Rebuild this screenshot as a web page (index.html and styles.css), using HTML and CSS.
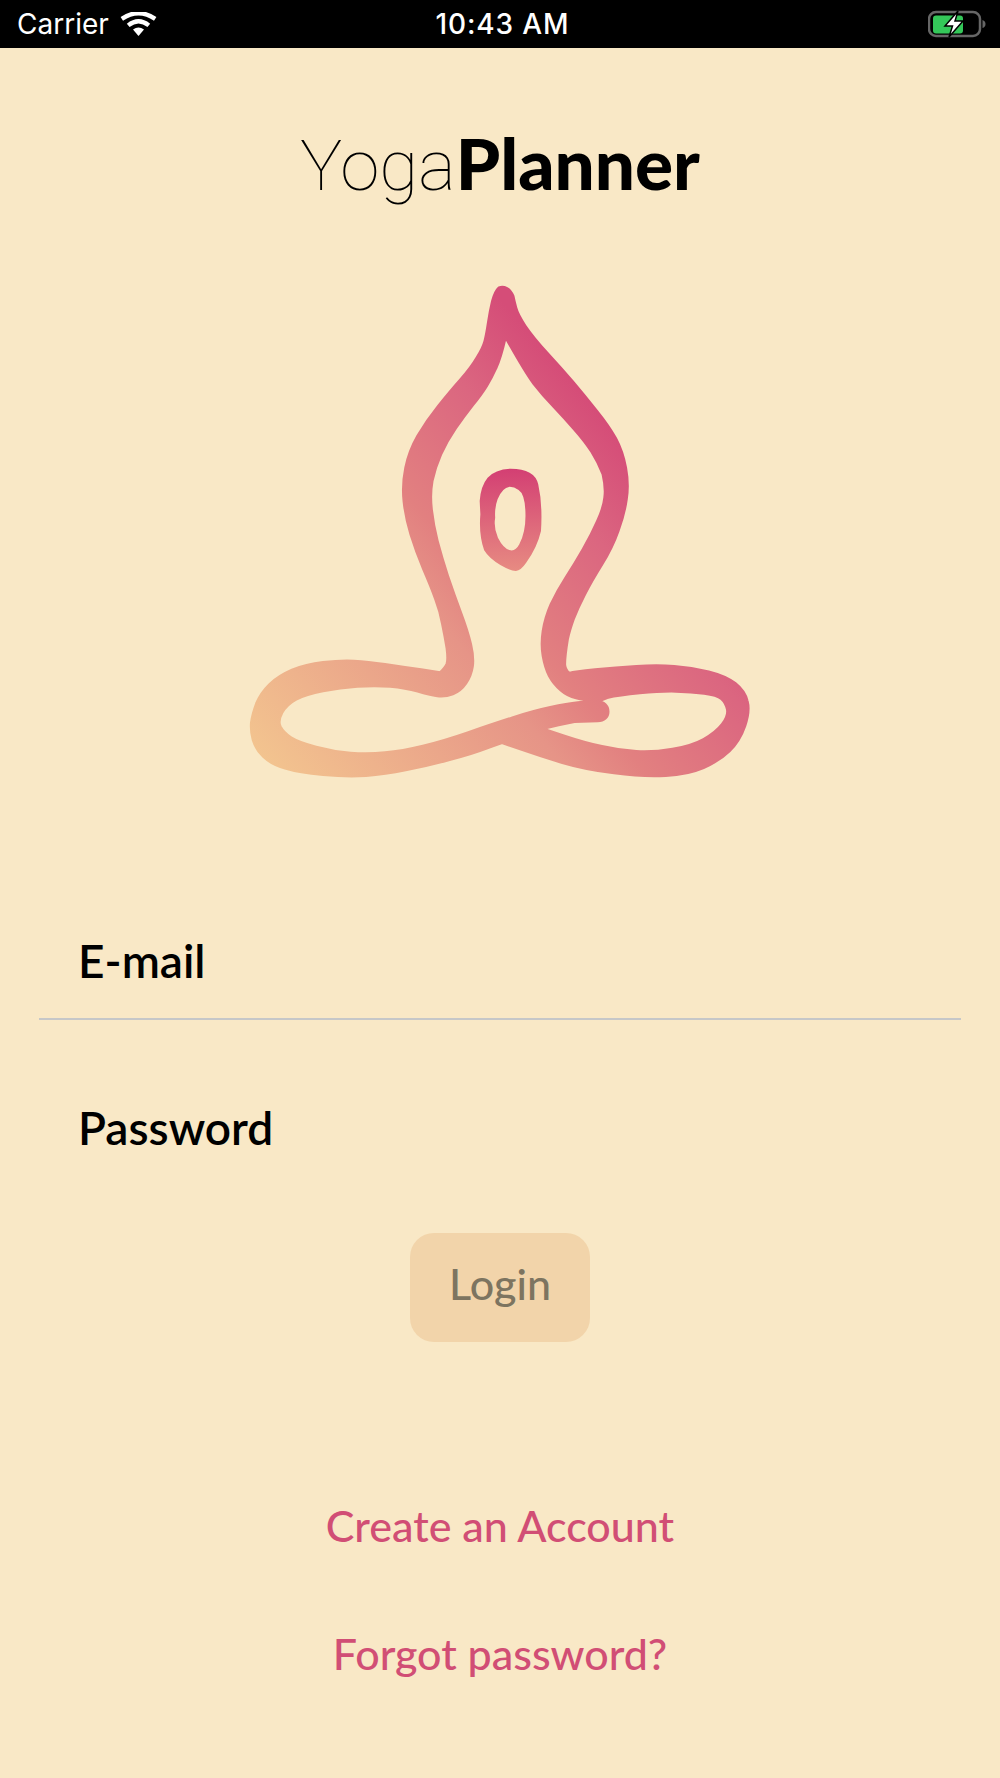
FILE: index.html
```html
<!DOCTYPE html>
<html lang="en">
<head>
    <meta charset="UTF-8">
    <meta name="viewport" content="width=device-width, initial-scale=1.0">
    <title>YogaPlanner</title>
    <link rel="stylesheet" href="styles.css">
</head>
<body>
    <!-- Status bar -->
    <div class="status-bar">
        <div class="status-left">
            <span class="carrier">Carrier</span>
            <svg class="wifi" width="37" height="24" viewBox="0 0 37 24">
                <path d="M18.5 24 L13 17.6 Q18.5 13.6 24 17.6 Z" fill="#fff"/>
                <path d="M8.2 13.4 Q18.5 5.2 28.8 13.4" fill="none" stroke="#fff" stroke-width="4.4"/>
                <path d="M1.8 6.8 Q18.5 -4.4 35.2 6.8" fill="none" stroke="#fff" stroke-width="4.4"/>
            </svg>
        </div>
        <span class="time">10:43 AM</span>
        <svg class="battery" width="60" height="28" viewBox="0 0 60 28">
            <rect x="1" y="2" width="51" height="24" rx="7" fill="none" stroke="#666" stroke-width="2.5"/>
            <rect x="5" y="5.5" width="30" height="18" rx="3" fill="#34c759"/>
            <path d="M54.5 10 Q57.5 11 57.5 14 Q57.5 17 54.5 18 Z" fill="#666"/>
            <path d="M30 1 L17 16 L24.5 16 L21 27 L35 11 L27 11 Z" fill="#fff" stroke="#000" stroke-width="1.5"/>
        </svg>
    </div>

    <div class="screen">
        <h1 class="brand"><span class="brand-light">Yoga</span><span class="brand-bold">Planner</span></h1>

        <svg class="logo" width="540" height="520" viewBox="0 0 1568 1560" preserveAspectRatio="none">
            <defs>
                <linearGradient id="body-fade" gradientUnits="userSpaceOnUse" x1="100" y1="1500" x2="1239" y2="548">
                    <stop offset="0" stop-color="#f3c58f"/>
                    <stop offset="0.457" stop-color="#e69487"/>
                    <stop offset="0.57" stop-color="#e28080"/>
                    <stop offset="0.8" stop-color="#db6680"/>
                    <stop offset="0.966" stop-color="#d54d78"/>
                </linearGradient>
                <linearGradient id="chakra-fade" x1="0" y1="0" x2="0" y2="1">
                    <stop offset="0" stop-color="#d33f73"/>
                    <stop offset="1" stop-color="#e78b82"/>
                </linearGradient>
            </defs>
            <!-- body outline, holes cut with evenodd -->
            <path class="logo-body" fill="url(#body-fade)" stroke="url(#body-fade)" fill-rule="evenodd" d="
                M781 50 Q770 60 762 90 Q755 120 750 155 Q745 190 740 210 Q735 230 717 260 Q700 290 670 325
                Q640 360 605 405 Q570 450 545 495 Q520 540 510 590 Q500 640 505 690 Q510 740 525 790
                Q540 840 562 895 Q585 950 597 985 Q610 1020 617 1060 Q625 1100 630 1132 Q634 1165 630 1178
                Q625 1190 610 1205 L555 1196 Q500 1188 450 1180 Q400 1173 360 1170 Q320 1168 270 1174
                Q220 1180 180 1197 Q140 1215 115 1240 Q90 1265 77 1297 Q65 1330 62 1355 Q60 1380 67 1407
                Q75 1435 97 1457 Q120 1480 160 1492 Q200 1505 270 1511 Q340 1518 395 1514 Q450 1510 510 1497
                Q570 1485 635 1467 Q700 1450 745 1432 Q770 1422 790 1415 L845 1435 Q900 1455 965 1475
                Q1030 1495 1115 1506 Q1200 1518 1265 1514 Q1330 1510 1375 1490 Q1420 1470 1450 1440
                Q1480 1410 1495 1365 Q1510 1320 1502 1290 Q1495 1260 1467 1237 Q1440 1215 1390 1202
                Q1340 1190 1290 1186 Q1240 1182 1180 1186 Q1120 1190 1060 1196 Q1000 1202 985 1207
                Q972 1195 972 1180 Q972 1155 980 1105 Q985 1080 997 1045 Q1010 1010 1030 970 Q1050 930 1080 880
                Q1110 830 1127 780 Q1145 730 1151 685 Q1158 640 1149 590 Q1140 540 1120 502 Q1100 465 1065 420
                Q1030 375 995 332 Q960 290 920 245 Q880 200 857 165 Q835 130 830 110 Q825 90 822 75
                Q815 58 804 52 Q793 46 781 50 Z
                M800 198 Q785 265 772 292 Q760 320 745 345 Q730 370 705 402 Q680 435 655 472 Q630 510 612 550
                Q595 590 587 630 Q580 670 585 715 Q590 760 602 810 Q615 860 632 915 Q650 970 670 1025
                Q690 1080 699 1120 Q708 1160 704 1187 Q700 1215 685 1237 Q670 1260 647 1269 Q625 1278 602 1275
                Q580 1272 545 1261 Q510 1250 465 1246 Q420 1243 370 1246 Q320 1250 270 1260 Q220 1270 192 1285
                Q165 1300 151 1325 Q138 1350 146 1367 Q155 1385 177 1400 Q200 1415 250 1428 Q300 1442 350 1446
                Q400 1450 450 1445 Q500 1440 560 1425 Q620 1410 690 1385 Q760 1360 820 1340 Q880 1320 930 1309
                Q980 1298 1010 1295 L1045 1291 Q1030 1287 1005 1281 Q980 1275 960 1257 Q940 1240 927 1215
                Q915 1190 909 1155 Q903 1120 909 1080 Q915 1040 932 1000 Q950 960 975 920 Q1000 880 1025 835
                Q1050 790 1067 750 Q1085 710 1088 680 Q1092 650 1083 610 Q1070 575 1050 542 Q1030 510 1000 475
                Q970 440 940 407 Q910 375 882 338 Q855 300 800 198 Z
                M1066 1292 C1086 1292 1098 1305 1098 1322 C1098 1338 1086 1350 1068 1350 L1000 1352 L954 1362
                L908 1373 L969 1394 Q1030 1415 1080 1426 Q1130 1438 1180 1441 Q1230 1444 1285 1434 Q1340 1425 1375 1405
                Q1410 1385 1429 1360 Q1448 1335 1444 1315 Q1440 1295 1427 1283 Q1415 1272 1377 1267 Q1340 1262 1295 1261
                Q1250 1260 1190 1266 Q1130 1272 1095 1280 Z"/>
            <path fill="url(#chakra-fade)" fill-rule="evenodd" d="
                M815 593 Q770 595 748 620 Q728 645 725 690 Q726 710 727 730 Q722 790 738 838 Q752 862 785 882
                Q815 900 830 900 Q845 898 860 875 Q892 830 903 780 Q908 700 895 640 Q885 593 815 593 Z
                M812 647 Q790 650 777 685 Q768 710 770 740 Q765 770 778 800 Q795 835 815 838 Q830 840 840 820
                Q858 785 858 735 Q858 670 838 657 Q825 647 812 647 Z"/>
        </svg>

        <div class="login-form">
            <div class="field field-line">E-mail</div>
            <div class="field">Password</div>
        </div>

        <button class="login-btn">Login</button>

        <div class="links">
            <a class="link">Create an Account</a>
            <a class="link">Forgot password?</a>
        </div>
    </div>
</body>
</html>
```

FILE: styles.css
```css
/* General Styles */
body {
    margin: 0;
    padding: 0;
    background: #f9e8c6;
    color: #000;
    font-family: "Lato Medium", Lato, "Noto Sans", sans-serif;
}

/* Status bar */
.status-bar {
    height: 48px;
    background: #000;
    color: #fff;
    display: grid;
    grid-template-columns: 1fr auto 1fr;
    align-items: center;
    padding: 0 12px 0 17px;
    font-family: Inter, sans-serif;
    font-size: 28px;
}

.status-left {
    display: flex;
    align-items: center;
    gap: 11px;
}

.wifi {
    display: block;
}

.time {
    font-weight: 500;
    letter-spacing: 0.85px;
}

.battery {
    justify-self: end;
}

/* Main screen */
.screen {
    display: flex;
    flex-direction: column;
    align-items: center;
}

.brand {
    margin: 72px 0 0;
    font-family: Lato, sans-serif;
    font-size: 71px;
    line-height: 86px;
    font-weight: normal;
}

.brand-light {
    font-family: Roboto, sans-serif;
    font-weight: 100;
}

.brand-bold {
    font-weight: 900;
}

.logo {
    display: block;
    margin-top: 62px;
}

.logo-body {
    stroke-width: 8;
    stroke-linejoin: round;
}

.login-form {
    width: 922px;
    margin-top: 140px;
}

.field {
    height: 158px;
    padding: 78px 0 0 39px;
    box-sizing: border-box;
    font-family: "Lato Semibold", Lato, sans-serif;
    font-size: 46px;
    line-height: 60px;
    font-weight: 600;
}

.field-line {
    height: 89px;
    border-bottom: 2px solid #c6c7c8;
    padding-top: 0;
}

.login-btn {
    width: 180px;
    height: 109px;
    margin-top: 55px;
    padding: 0 0 8px;
    border: none;
    border-radius: 24px;
    background: #f2d4aa;
    color: #7d7460;
    font-family: inherit;
    font-size: 43px;
    font-weight: 500;
}

.links {
    display: flex;
    flex-direction: column;
    align-items: center;
    gap: 68px;
    margin-top: 154px;
}

.link {
    color: #d14e75;
    font-size: 43px;
    line-height: 60px;
    font-weight: 500;
}
```
